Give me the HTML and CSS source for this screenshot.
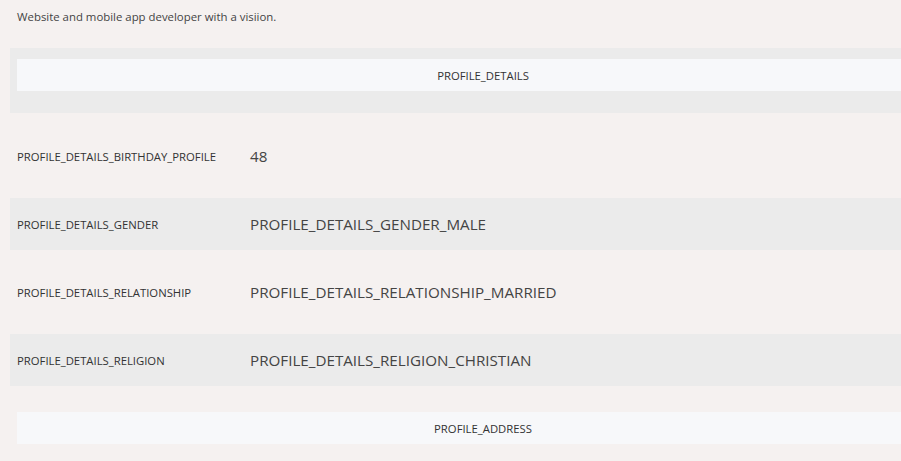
FILE: index.html
```html
<!DOCTYPE html>
<html>
<head>
<meta charset="utf-8">
<link rel="stylesheet" href="styles.css">
</head>
<body>
<div class="frame">
<div class="page">
  <p class="bio">Website and mobile app developer with a visiion.</p>
  <div class="panel">
    <div class="bar">PROFILE_DETAILS</div>
  </div>
  <div class="row first">
    <div class="label">PROFILE_DETAILS_BIRTHDAY_PROFILE</div>
    <div class="value">48</div>
  </div>
  <div class="row shaded">
    <div class="label">PROFILE_DETAILS_GENDER</div>
    <div class="value">PROFILE_DETAILS_GENDER_MALE</div>
  </div>
  <div class="row">
    <div class="label">PROFILE_DETAILS_RELATIONSHIP</div>
    <div class="value">PROFILE_DETAILS_RELATIONSHIP_MARRIED</div>
  </div>
  <div class="row shaded">
    <div class="label">PROFILE_DETAILS_RELIGION</div>
    <div class="value">PROFILE_DETAILS_RELIGION_CHRISTIAN</div>
  </div>
  <div class="section">
    <div class="bar">PROFILE_ADDRESS</div>
  </div>
</div>
</div>
</body>
</html>
```
FILE: styles.css
```css
html, body {
  margin: 0;
  padding: 0;
  background: #f5f1f0;
}
body {
  font-family: "Open Sans", "Noto Sans", sans-serif;
  color: #333;
}
.frame {
  width: 901px;
  height: 461px;
  overflow: hidden;
}
.page {
  width: 946px;
  padding-left: 10px;
}
.bio {
  margin: 0;
  padding: 9px 0 0 7px;
  height: 39px;
  font-size: 11.4px;
  line-height: 16px;
  color: #444;
}
.panel {
  background: #ebebeb;
  padding: 11px 7px 22px 7px;
}
.bar {
  background: #f7f8fa;
  height: 32px;
  display: flex;
  align-items: center;
  justify-content: center;
  font-size: 11.3px;
  color: #333;
}
.row {
  height: 52px;
  margin-top: 16px;
  display: flex;
  align-items: center;
  padding-left: 7px;
}
.row.first {
  margin-top: 17px;
}
.shaded {
  background: #ebebeb;
}
.label {
  width: 233px;
  font-size: 11.3px;
  color: #333;
}
.value {
  font-size: 15.2px;
  color: #444;
}
.section {
  padding: 26px 7px 0 7px;
}
```
